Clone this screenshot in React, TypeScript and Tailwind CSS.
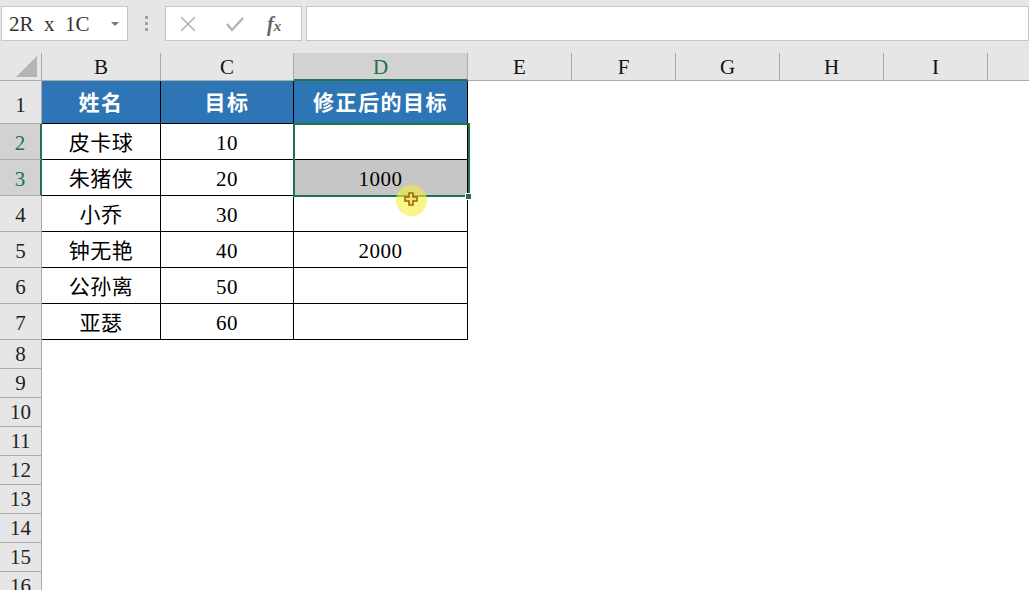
import React from "react";

const serif = { fontFamily: '"Liberation Serif", "Noto Sans CJK SC", serif' };

const cols = [
  { key: "B", w: "w-[119px]" },
  { key: "C", w: "w-[133px]" },
  { key: "D", w: "w-[174px]" },
  { key: "E", w: "w-[104px]" },
  { key: "F", w: "w-[104px]" },
  { key: "G", w: "w-[104px]" },
  { key: "H", w: "w-[104px]" },
  { key: "I", w: "w-[104px]" },
  { key: "J", w: "w-[60px]" },
];

const data = [
  ["皮卡球", "10", ""],
  ["朱猪侠", "20", "1000"],
  ["小乔", "30", ""],
  ["钟无艳", "40", "2000"],
  ["公孙离", "50", ""],
  ["亚瑟", "60", ""],
];

function RowHead({ n, h, sel, pad }: { n: number; h: string; sel?: boolean; pad?: string }) {
  return (
    <div
      className={`${h} ${pad ?? ""} w-[42px] shrink-0 box-border flex items-center justify-center text-[21px] border-b border-[#ababab] ${
        sel
          ? "bg-[#d2d2d2] text-[#217346] border-r-2 border-r-[#217346]"
          : "bg-[#e6e6e6] text-[#222] border-r border-r-[#ababab]"
      }`}
      style={serif}
    >
      {n}
    </div>
  );
}

function EmptyCells({ h }: { h: string }) {
  return (
    <>
      {cols.slice(3).map((c) => (
        <div key={c.key} className={`${h} ${c.w} shrink-0 bg-white`} />
      ))}
    </>
  );
}

export default function App() {
  return (
    <div className="w-[1029px] h-[590px] overflow-hidden bg-white select-none">
      {/* formula bar */}
      <div className="h-[53px] bg-[#e6e6e6] flex items-start pt-[6px]">
        <div className="ml-[1px] w-[127px] h-[35px] bg-white border border-[#c6c6c6] flex items-center pl-[7px] pr-[8px]">
          <span className="text-[21px] text-[#333] whitespace-pre flex-1 pt-[2px]" style={serif}>
            2R  x  1C
          </span>
          <span className="w-0 h-0 border-l-[4px] border-r-[4px] border-t-[4px] border-l-transparent border-r-transparent border-t-[#777]" />
        </div>
        <div className="w-[37px] h-[35px] flex flex-col items-center justify-center gap-[3px]">
          <span className="w-[3px] h-[3px] bg-[#a0a0a0]" />
          <span className="w-[3px] h-[3px] bg-[#a0a0a0]" />
          <span className="w-[3px] h-[3px] bg-[#a0a0a0]" />
        </div>
        <div className="w-[137px] h-[35px] bg-white border border-[#c6c6c6] flex items-center">
          <svg width="18" height="18" viewBox="0 0 18 18" className="ml-[13px]">
            <path d="M2 2 L16 16 M16 2 L2 16" stroke="#b4b4b4" strokeWidth="1.6" />
          </svg>
          <svg width="20" height="18" viewBox="0 0 20 18" className="ml-[28px]">
            <path d="M2 9 L7 15 L18 3" stroke="#b4b4b4" strokeWidth="2.4" fill="none" />
          </svg>
          <span
            className="ml-[22px] text-[20px] italic font-bold text-[#666]"
            style={{ fontFamily: '"Liberation Serif", serif' }}
          >
            f<span className="text-[15px]">x</span>
          </span>
        </div>
        <div className="ml-[4px] flex-1 h-[35px] bg-white border border-[#c6c6c6]" />
      </div>

      {/* grid */}
      <div className="relative">
        {/* column headers */}
        <div className="flex h-[28px]">
          <div className="w-[42px] h-[28px] shrink-0 box-border bg-[#e6e6e6] border-b border-[#ababab] border-r border-r-[#ababab] relative">
            <svg width="22" height="21" viewBox="0 0 22 21" className="absolute right-[3px] bottom-[3px]">
              <path d="M21 0 L21 21 L0 21 Z" fill="#b4b4b4" />
            </svg>
          </div>
          {cols.map((c) => {
            const sel = c.key === "D";
            return (
              <div
                key={c.key}
                className={`${c.w} h-[28px] shrink-0 box-border flex items-center justify-center text-[21px] pt-[3px] border-r border-r-[#ababab] ${
                  sel
                    ? "bg-[#d2d2d2] text-[#217346] border-b-2 border-b-[#217346]"
                    : "bg-[#e6e6e6] text-[#111] border-b border-b-[#ababab]"
                }`}
                style={serif}
              >
                {c.key === "J" ? "" : c.key}
              </div>
            );
          })}
        </div>

        {/* row 1: header */}
        <div className="flex h-[43px]">
          <RowHead n={1} h="h-[43px]" pad="pt-[8px]" />
          {["姓名", "目标", "修正后的目标"].map((t, i) => (
            <div
              key={t}
              className={`${cols[i].w} h-[43px] shrink-0 box-border bg-[#2e75b6] border-r border-b border-black flex items-center justify-center pt-[3px] text-white font-bold text-[21px] tracking-[1.5px]`}
              style={serif}
            >
              {t}
            </div>
          ))}
          <EmptyCells h="h-[43px]" />
        </div>

        {/* data rows */}
        {data.map((r, ri) => (
          <div key={ri} className="flex h-[36px]">
            <RowHead n={ri + 2} h="h-[36px]" sel={ri < 2} pad="pt-[5px]" />
            {r.map((t, i) => (
              <div
                key={i}
                className={`${cols[i].w} h-[36px] shrink-0 box-border border-r border-b border-black flex items-center justify-center pt-[4px] text-[21px] text-black tracking-[0.5px] ${
                  ri === 1 && i === 2 ? "bg-[#c6c6c6]" : "bg-white"
                }`}
                style={serif}
              >
                {t}
              </div>
            ))}
            <EmptyCells h="h-[36px]" />
          </div>
        ))}

        {/* empty rows */}
        {Array.from({ length: 9 }, (_, i) => (
          <div key={i} className="flex h-[29px]">
            <RowHead n={i + 8} h="h-[29px]" pad="pt-[2px]" />
            <div className="flex-1 bg-white" />
          </div>
        ))}

        {/* selection D2:D3 */}
        <div className="absolute left-[293px] top-[70px] w-[177px] h-[74px] border-2 border-[#217346] pointer-events-none" />
        <div className="absolute left-[465px] top-[140px] w-[7px] h-[7px] bg-[#217346] border border-white" />

        {/* cursor highlight */}
        <div className="absolute left-[396px] top-[132px] w-[31px] h-[31px] rounded-full bg-[#f3ee3a]/60" />
        <svg width="14" height="14" viewBox="0 0 14 14" className="absolute left-[404px] top-[139px]">
          <path
            d="M5 1 H9 V5 H13 V9 H9 V13 H5 V9 H1 V5 H5 Z"
            fill="#f7e27a"
            stroke="#9b6a00"
            strokeWidth="1.6"
          />
        </svg>
      </div>
    </div>
  );
}
